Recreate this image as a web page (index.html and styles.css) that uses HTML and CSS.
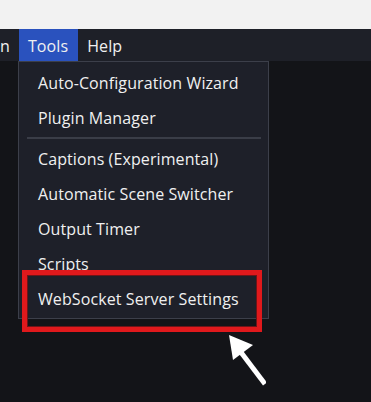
FILE: index.html
```html
<!DOCTYPE html>
<html lang="en">

<head>
    <meta charset="UTF-8">
    <meta name="viewport" content="width=device-width, initial-scale=1.0">
    <title>Tools menu</title>
    <link rel="stylesheet" href="styles.css">
</head>

<body>
    <div class="titlebar"></div>
    <ul class="menubar">
        <li class="cut">n</li>
        <li class="active">Tools</li>
        <li>Help</li>
    </ul>
    <div class="workspace">
        <ul class="dropdown">
            <li>Auto-Configuration Wizard</li>
            <li>Plugin Manager</li>
            <li class="separator"></li>
            <li>Captions (Experimental)</li>
            <li>Automatic Scene Switcher</li>
            <li>Output Timer</li>
            <li>Scripts</li>
            <li>WebSocket Server Settings</li>
        </ul>
        <!-- annotation drawn over the screenshot -->
        <div class="highlight"></div>
        <svg class="arrow" width="50" height="60" viewBox="0 0 50 60">
            <polygon points="13,0 17,25 37,10" fill="#ffffff" />
            <line x1="24" y1="16" x2="49" y2="49" stroke="#ffffff" stroke-width="5" />
        </svg>
    </div>
</body>

</html>
```

FILE: styles.css
```css
body {
    margin: 0;
    font-family: "Open Sans", "Noto Sans", sans-serif;
    font-size: 16px;
    letter-spacing: 0.1px;
    background: #131418;
    color: #f0f0f0;
}

ul, li {
    list-style: none;
    margin: 0;
    padding: 0;
}

.titlebar {
    height: 29px;
    background: #f2f2f2;
}

.menubar {
    display: flex;
    height: 32px;
    background: #1e2028;
}

.menubar li {
    display: flex;
    align-items: center;
    padding: 2px 10px 0 9px;
}

.menubar .cut {
    padding: 2px 9px 0 0;
}

.menubar .active {
    background: #2a52be;
}

.workspace {
    position: relative;
    height: 341px;
}

.dropdown {
    box-sizing: border-box;
    margin-left: 18px;
    width: 251px;
    padding: 4px 0 1px 0;
    background: #1e2029;
    border: 1px solid #3c3f4a;
}

.dropdown li {
    height: 35px;
    line-height: 35px;
    padding-left: 19px;
    white-space: nowrap;
}

.dropdown .separator {
    height: 2px;
    margin: 1px 7px 3px 8px;
    padding: 0;
    background: #3a3d47;
}

.highlight {
    position: absolute;
    left: 22px;
    top: 209px;
    width: 240px;
    height: 62px;
    box-sizing: border-box;
    border: 5px solid #e0191c;
    box-shadow: inset 0 0 0 1px #6e1518;
}

.arrow {
    position: absolute;
    left: 216px;
    top: 274px;
}
```
